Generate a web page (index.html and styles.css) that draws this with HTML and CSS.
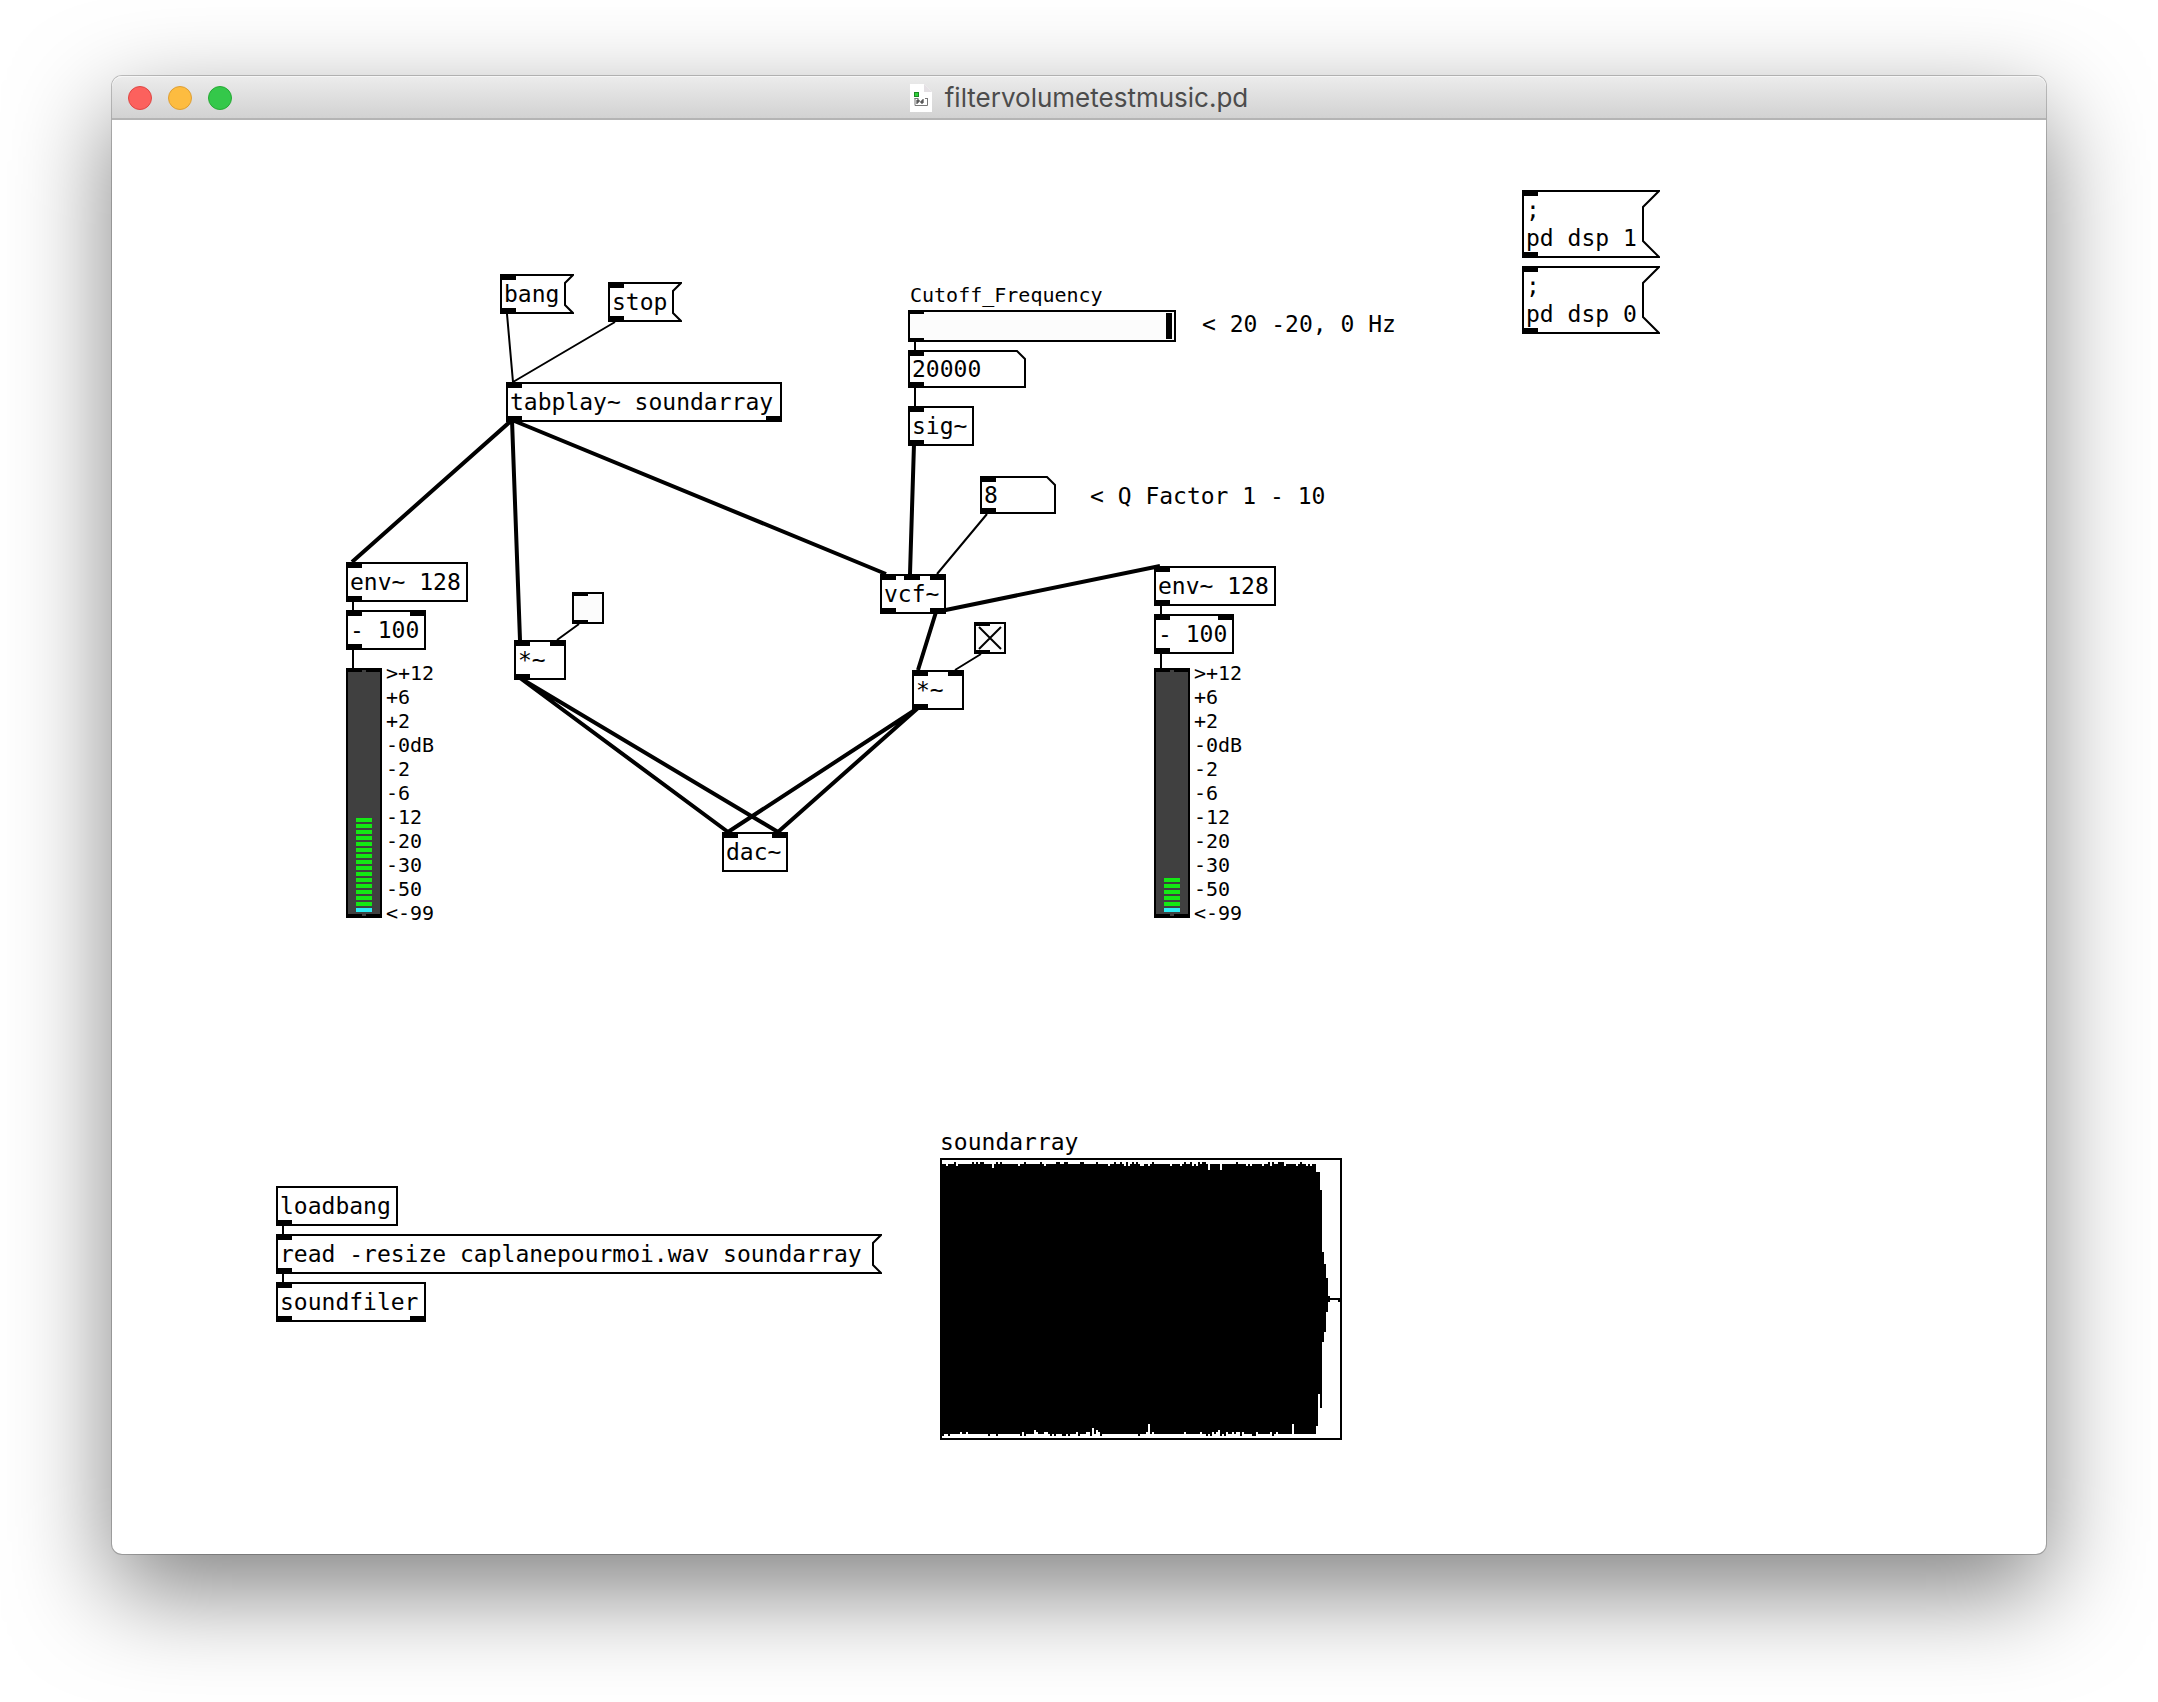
FILE: index.html
```
<!DOCTYPE html>
<html lang="en">
<head>
<meta charset="utf-8">
<title>filtervolumetestmusic.pd</title>
<link rel="stylesheet" href="styles.css">
</head>
<body>
<main class="window">
  <header class="titlebar">
    <div class="lights">
      <button class="light close" aria-label="Close"></button>
      <button class="light minimize" aria-label="Minimize"></button>
      <button class="light zoom" aria-label="Zoom"></button>
    </div>
    <h1 class="title">
      <svg class="doc-icon" viewBox="0 0 22 28" aria-hidden="true">
        <path d="M0 0h14l8 8v20H0z" fill="#fff"/>
        <path d="M14 0v8h8z" fill="#e4e0e4"/>
        <rect x="4.500" y="8.500" width="4" height="4" fill="#2fd03a" stroke="#1c8a24"/>
        <path d="M5 14v7.500h12.500V14.500M4.500 14.500h4M15 14.500h3" fill="none" stroke="#777"/>
        <path d="M7 20v-4h2v2H7M13 15v4h-2v-2h2" fill="none" stroke="#222"/>
      </svg>
      <span>filtervolumetestmusic.pd</span>
    </h1>
  </header>

  <section class="canvas" aria-label="Patch">
    <button class="node message n-bang"><svg class="outline" viewBox="0 0 74 40" aria-hidden="true"><path d="M1 1H73L65 9V31L73 39H1Z"/></svg>bang<i class="port in"></i><i class="port out"></i></button>
    <button class="node message n-stop"><svg class="outline" viewBox="0 0 74 40" aria-hidden="true"><path d="M1 1H73L65 9V31L73 39H1Z"/></svg>stop<i class="port in"></i><i class="port out"></i></button>
    <div class="node object n-tabplay">tabplay~ soundarray<i class="port in"></i><i class="port out"></i><i class="port out last"></i></div>

    <label class="caption n-cutoff" for="cutoff">Cutoff_Frequency</label>
    <div class="node slider n-slider"><input id="cutoff" type="range" min="20" max="20000" value="20000"><i class="port in thin"></i><i class="port out thin"></i></div>
    <p class="comment n-range">&lt; 20 -20, 0 Hz</p>
    <div class="node number n-freq"><svg class="outline" viewBox="0 0 118 38" aria-hidden="true"><path d="M1 1H109L117 9V37H1Z"/></svg><input type="text" value="20000" aria-label="Frequency"><i class="port in"></i><i class="port out"></i></div>
    <div class="node object n-sig">sig~<i class="port in"></i><i class="port out"></i></div>
    <div class="node number n-q"><svg class="outline" viewBox="0 0 76 38" aria-hidden="true"><path d="M1 1H67L75 9V37H1Z"/></svg><input type="text" value="8" aria-label="Q factor"><i class="port in"></i><i class="port out"></i></div>
    <p class="comment n-qlabel">&lt; Q Factor 1 - 10</p>

    <div class="node object n-vcf">vcf~<i class="port in"></i><i class="port in middle"></i><i class="port in last"></i><i class="port out"></i><i class="port out last"></i></div>
    <div class="node toggle n-toggle-dry"><input type="checkbox" aria-label="Dry signal"><i class="port in thin"></i><i class="port out thin"></i></div>
    <div class="node toggle n-toggle-wet"><input type="checkbox" aria-label="Filtered signal" checked><svg class="cross" viewBox="0 0 32 32" aria-hidden="true"><path d="M5 5L27 27M27 5L5 27"/></svg><i class="port in thin"></i><i class="port out thin"></i></div>
    <div class="node object short n-mul-dry">*~<i class="port in"></i><i class="port in last"></i><i class="port out"></i></div>
    <div class="node object short n-mul-wet">*~<i class="port in"></i><i class="port in last"></i><i class="port out"></i></div>
    <div class="node object n-dac">dac~<i class="port in"></i><i class="port in last"></i></div>

    <div class="node object n-env-dry">env~ 128<i class="port in"></i><i class="port out"></i></div>
    <div class="node object n-sub-dry">- 100<i class="port in"></i><i class="port in last"></i><i class="port out"></i></div>
    <div class="vu n-vu-dry">
      <div class="meter"><div class="level" style="height:94px"></div></div>
      <ul class="scale"><li>&gt;+12</li><li>+6</li><li>+2</li><li>-0dB</li><li>-2</li><li>-6</li><li>-12</li><li>-20</li><li>-30</li><li>-50</li><li>&lt;-99</li></ul>
    </div>

    <div class="node object n-env-wet">env~ 128<i class="port in"></i><i class="port out"></i></div>
    <div class="node object n-sub-wet">- 100<i class="port in"></i><i class="port in last"></i><i class="port out"></i></div>
    <div class="vu n-vu-wet">
      <div class="meter"><div class="level" style="height:34px"></div></div>
      <ul class="scale"><li>&gt;+12</li><li>+6</li><li>+2</li><li>-0dB</li><li>-2</li><li>-6</li><li>-12</li><li>-20</li><li>-30</li><li>-50</li><li>&lt;-99</li></ul>
    </div>

    <button class="node message n-dsp-on"><svg class="outline" viewBox="0 0 138 68" aria-hidden="true"><path d="M1 1H137L121 17V51L137 67H1Z"/></svg>;<br>pd dsp 1<i class="port in"></i><i class="port out"></i></button>
    <button class="node message n-dsp-off"><svg class="outline" viewBox="0 0 138 68" aria-hidden="true"><path d="M1 1H137L121 17V51L137 67H1Z"/></svg>;<br>pd dsp 0<i class="port in"></i><i class="port out"></i></button>

    <div class="node object n-loadbang">loadbang<i class="port out"></i></div>
    <button class="node message n-read"><svg class="outline" viewBox="0 0 606 40" aria-hidden="true"><path d="M1 1H605L597 9V31L605 39H1Z"/></svg>read -resize caplanepourmoi.wav soundarray<i class="port in"></i><i class="port out"></i></button>
    <div class="node object n-soundfiler">soundfiler<i class="port in"></i><i class="port out"></i><i class="port out last"></i></div>

    <figure class="array n-array">
      <figcaption>soundarray</figcaption>
      <svg class="wave" viewBox="0 0 201 141" role="img" aria-label="Waveform of soundarray">
        <path class="frame" d="M.5 .5H200.500V140.500H.5Z"/>
        <path class="fill" d="M0 3H188V7H190V16H191V47H192V53H193V60H194V69H195V70H200V72H199V71H195V72H194V77H193V87H192V92H191V125H190V118H189V134H188V138H0Z"/>
        <path class="peak" d="M7 2.500h1M16 2.500h1M18 2.500h1M20 2.500h2M28 2.500h1M30 2.500h1M42 2.500h1M50 2.500h1M58 2.500h2M62 2.500h2M70 2.500h2M78 2.500h1M87 2.500h1M90 2.500h1M93 2.500h1M96 2.500h1M98 2.500h1M106 2.500h1M122 2.500h1M125 2.500h1M129 2.500h1M131 2.500h2M148 2.500h1M164 2.500h1M166 2.500h1M169 2.500h3M180 2.500h1M4 138.500h1M24 138.500h1M28 138.500h1M40 138.500h1M42 138.500h1M55 138.500h1M57 138.500h1M61 138.500h2M64 138.500h1M69 138.500h1M75 138.500h1M80 138.500h1M99 138.500h1M133 138.500h1M135 138.500h1M140 138.500h1M142 138.500h1M150 138.500h1M156 138.500h2M166 138.500h1M1 138.500h1"/>
        <path class="dip" d="M3 3.500h1M8 3.500h1M26 4h1M39 3.500h1M52 3.500h1M84 3.500h1M92 3.500h1M94 3.500h1M100 3.500h2M104 3.500h1M115 3.500h1M120 3.500h1M126 3.500h1M128 3.500h1M153 3.500h1M155 3.500h1M161 3.500h1M165 3.500h1M172 3.500h1M178 3.500h1M183 3.500h1M185 3.500h1M134.500 3v3M140.500 3v3M26.500 3v2M10 137.500h1M13 137.500h1M41 137.500h1M48 137.500h1M52 137.500h2M68 137.500h1M73 137.500h2M79 137.500h1M103 137.500h1M106 137.500h1M122 137.500h1M130 137.500h1M136 137.500h1M138 137.500h1M143 137.500h1M146 137.500h1M148 137.500h2M151 137.500h1M158 137.500h1M165 137.500h1M168 137.500h1M47.500 136v2M76.500 135v3M78.500 136v2M104.500 133v5M139.500 136v2M176.500 133v5"/>
      </svg>
    </figure>

    <svg class="cables" aria-hidden="true">
      <path class="control" d="M395 194L401 262M503 202L401 262M803 222V230M803 268V286M875 394L825 454M869 534L843 550M467 504L445 520M241 482V490M241 530V548M1049 486V494M1049 534V548M171 1106V1114M171 1154V1162"/>
      <path class="signal" d="M400 300L240 442M400 300L408 520M400 300L774 454M802 324L798 454M824 492L806 550M824 492L1048 446M408 558L616 712M408 558L666 712M806 588L616 712M806 588L666 712"/>
    </svg>
  </section>
</main>
</body>
</html>
```
FILE: styles.css
```
* {
  box-sizing: border-box;
}

body {
  margin: 0;
  min-height: 100vh;
  padding: 76px 112px 148px;
  display: flex;
  background: #fff;
  color: #000;
  font: 23px/28px "DejaVu Sans Mono", monospace;
}

button,
input {
  margin: 0;
  padding: 0;
  border: 0;
  background: none;
  color: inherit;
  font: inherit;
}

.window {
  flex: 1;
  display: flex;
  flex-direction: column;
  background: #fff;
  border-radius: 10px;
  box-shadow: 0 0 0 1px rgba(0, 0, 0, 0.22), 0 36px 100px rgba(0, 0, 0, 0.5);
}

/* Title bar */

.titlebar {
  display: grid;
  grid-template-columns: 1fr auto 1fr;
  align-items: center;
  height: 44px;
  padding: 2px 16px 0;
  border-bottom: 2px solid #b4b4b4;
  border-radius: 10px 10px 0 0;
  background: linear-gradient(#ececec, #d2d2d2);
  box-shadow: inset 0 1px #f6f6f6;
}

.lights {
  display: flex;
  gap: 16px;
}

.light {
  width: 24px;
  height: 24px;
  border: 1px solid;
  border-radius: 50%;
}

.close {
  background: #fc615d;
  border-color: #df4744;
}

.minimize {
  background: #fdbc40;
  border-color: #de9f34;
}

.zoom {
  background: #34c84a;
  border-color: #27aa35;
}

.title {
  display: flex;
  align-items: center;
  gap: 13px;
  margin: 0;
  color: #4c4c4c;
  font: 400 26px/40px Inter, sans-serif;
}

.doc-icon {
  width: 22px;
  height: 28px;
}

/* Patch canvas */

.canvas {
  position: relative;
  flex: 1;
  min-height: 1340px;
}

.cables {
  position: absolute;
  inset: 0;
  width: 100%;
  height: 100%;
  fill: none;
  stroke: #000;
  pointer-events: none;
}

.control {
  stroke-width: 2;
}

.signal {
  stroke-width: 4;
}

.node,
.vu,
.array,
.comment,
.caption {
  position: absolute;
  margin: 0;
}

.node,
.comment {
  white-space: pre;
}

.object {
  height: 40px;
  padding: 4px 4px 4px 2px;
  border: 2px solid #000;
}

.short {
  width: 52px;
}

.message {
  padding: 6px 4px;
  text-align: left;
}

.outline {
  position: absolute;
  inset: 0;
  width: 100%;
  height: 100%;
  fill: none;
  stroke: #000;
  stroke-width: 2;
}

.number {
  height: 38px;
}

.number input {
  display: block;
  width: 100%;
  height: 38px;
  padding: 0 4px;
}

.slider {
  width: 268px;
  height: 32px;
}

.slider input {
  appearance: none;
  display: block;
  width: 100%;
  height: 32px;
  padding: 0 2px;
  border: 2px solid #000;
  background: #fcfcfc;
}

.slider input::-webkit-slider-thumb {
  appearance: none;
  width: 6px;
  height: 26px;
  border-radius: 0;
  background: #000;
}

.toggle {
  width: 32px;
  height: 32px;
}

.toggle input {
  appearance: none;
  display: block;
  width: 32px;
  height: 32px;
  border: 2px solid #000;
  background: #fcfcfc;
}

.cross {
  position: absolute;
  inset: 0;
  stroke: #000;
  stroke-width: 2;
  pointer-events: none;
}

/* Inlets and outlets */

.port {
  position: absolute;
  left: 0;
  width: 16px;
  height: 6px;
  background: #000;
}

.port.thin {
  height: 4px;
}

.port.in {
  top: 0;
}

.port.out {
  bottom: 0;
}

.port.middle {
  left: 24px;
}

.port.last {
  left: auto;
  right: 0;
}

.object > .port {
  margin: -2px;
}

.caption {
  font-size: 20px;
  line-height: 24px;
}

/* Level meters */

.vu {
  display: flex;
  gap: 4px;
}

.meter {
  position: relative;
  display: flex;
  align-items: flex-end;
  justify-content: center;
  width: 36px;
  height: 250px;
  padding-bottom: 2px;
  border: solid #000;
  border-width: 4px 2px;
  background: #404040;
}

.meter::before,
.meter::after {
  content: "";
  position: absolute;
  left: 14px;
  width: 4px;
  height: 2px;
  background: #404040;
}

.meter::before {
  top: -2px;
}

.meter::after {
  bottom: -2px;
}

.level {
  width: 16px;
  background:
    linear-gradient(#2ceef4, #2ceef4) bottom / 100% 4px no-repeat,
    repeating-linear-gradient(to top, #14e814 0 4px, transparent 4px 6px);
}

.scale {
  margin: -7px 0 0;
  padding: 0;
  list-style: none;
  font-size: 20px;
  line-height: 24px;
}

/* Array graph */

.array {
  display: flex;
  flex-direction: column;
  gap: 2px;
  width: 402px;
}

.wave {
  display: block;
  width: 402px;
  height: 282px;
  shape-rendering: crispEdges;
}

.frame {
  fill: #fff;
  stroke: #000;
}

.peak {
  stroke: #000;
}

.dip {
  stroke: #fff;
}

/* Places on the patch canvas */

.n-bang { left: 388px; top: 154px; width: 74px; }
.n-stop { left: 496px; top: 162px; width: 74px; }
.n-tabplay { left: 394px; top: 262px; width: 276px; }
.n-cutoff { left: 798px; top: 163px; }
.n-slider { left: 796px; top: 190px; }
.n-range { left: 1090px; top: 190px; }
.n-freq { left: 796px; top: 230px; width: 118px; }
.n-sig { left: 796px; top: 286px; width: 66px; }
.n-q { left: 868px; top: 356px; width: 76px; }
.n-qlabel { left: 978px; top: 362px; }
.n-vcf { left: 768px; top: 454px; width: 66px; }
.n-toggle-dry { left: 460px; top: 472px; }
.n-toggle-wet { left: 862px; top: 502px; }
.n-mul-dry { left: 402px; top: 520px; }
.n-mul-wet { left: 800px; top: 550px; }
.n-dac { left: 610px; top: 712px; width: 66px; }
.n-env-dry { left: 234px; top: 442px; width: 122px; }
.n-sub-dry { left: 234px; top: 490px; width: 80px; }
.n-vu-dry { left: 234px; top: 548px; }
.n-env-wet { left: 1042px; top: 446px; width: 122px; }
.n-sub-wet { left: 1042px; top: 494px; width: 80px; }
.n-vu-wet { left: 1042px; top: 548px; }
.n-dsp-on { left: 1410px; top: 70px; width: 138px; }
.n-dsp-off { left: 1410px; top: 146px; width: 138px; }
.n-loadbang { left: 164px; top: 1066px; width: 122px; }
.n-read { left: 164px; top: 1114px; width: 606px; }
.n-soundfiler { left: 164px; top: 1162px; width: 150px; }
.n-array { left: 828px; top: 1008px; }
```
